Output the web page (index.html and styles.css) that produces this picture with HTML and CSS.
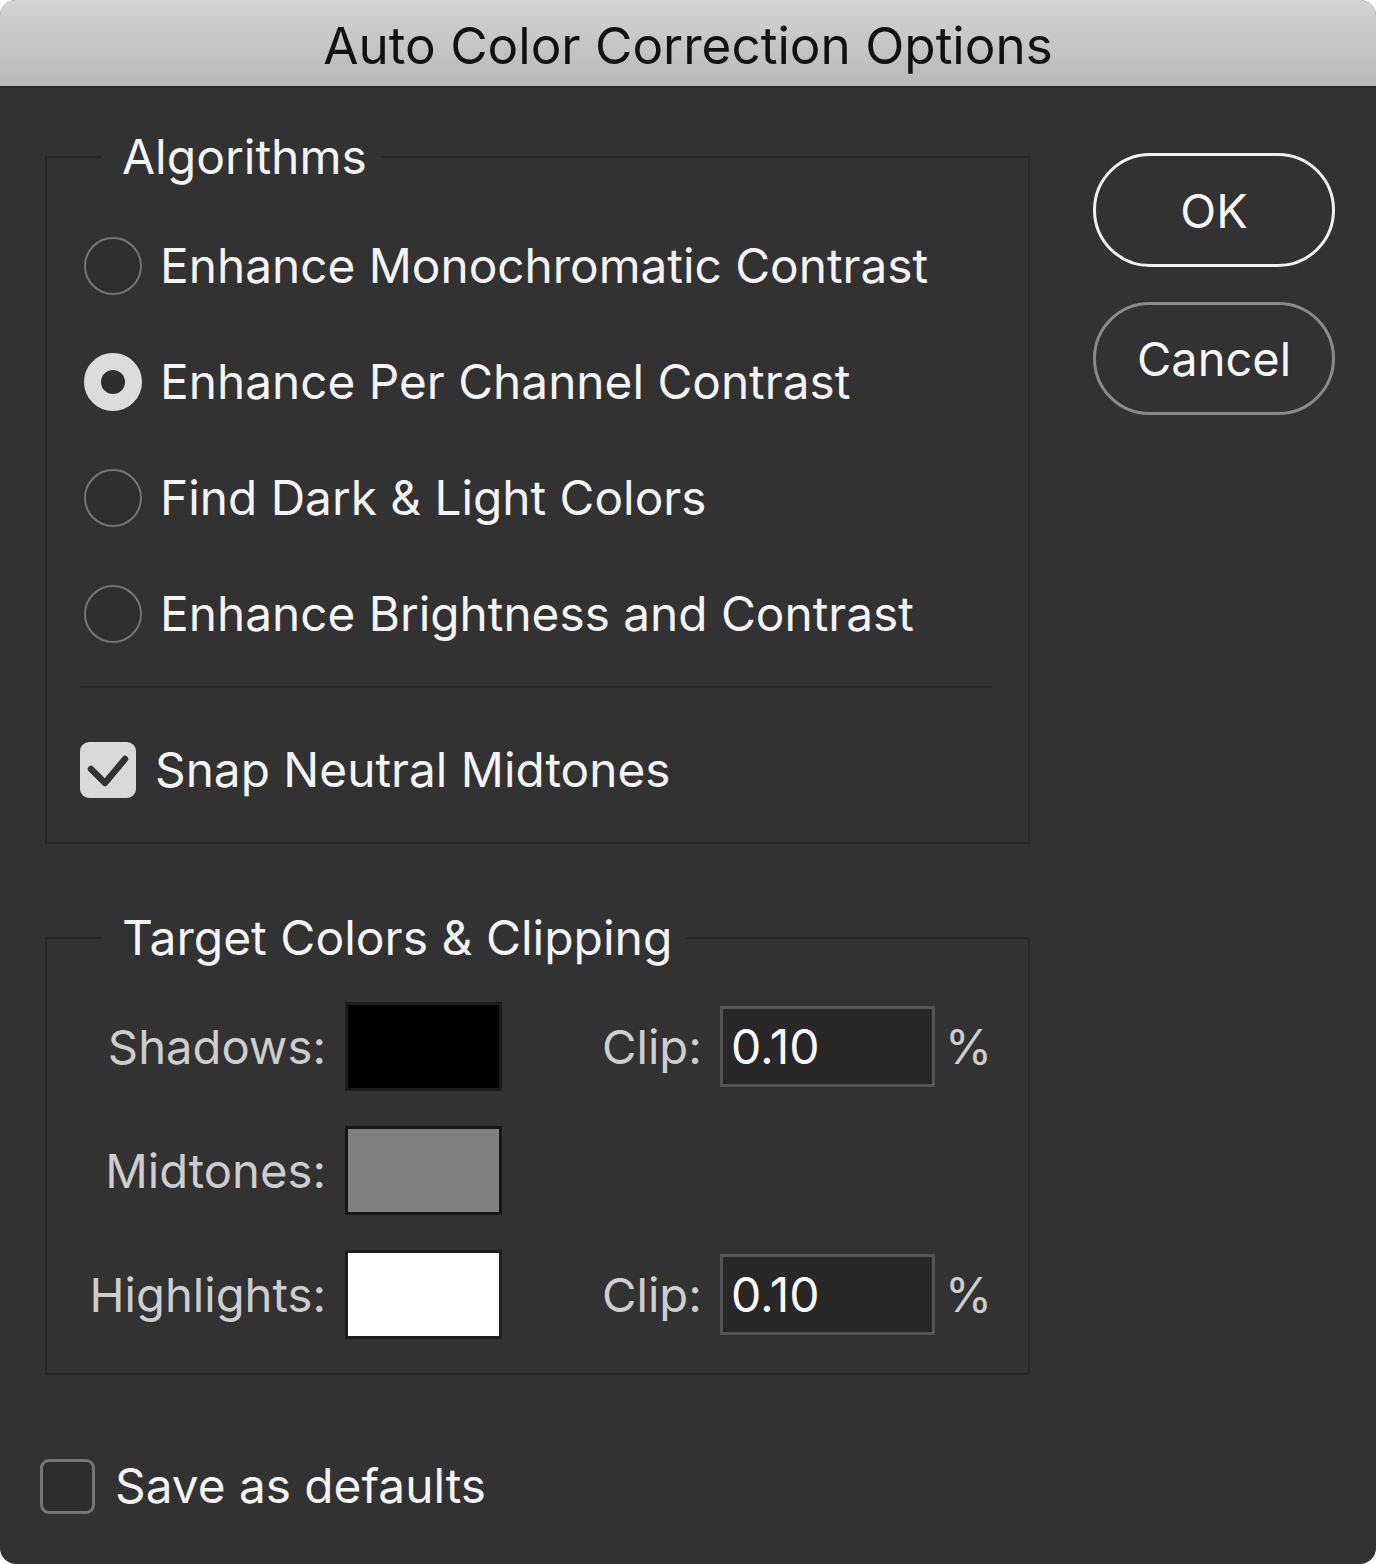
FILE: index.html
```html
<!DOCTYPE html>
<html>
<head>
<meta charset="utf-8">
<title>Auto Color Correction Options</title>
<link rel="stylesheet" href="styles.css">
</head>
<body>
<div class="dialog">
  <div class="titlebar">Auto Color Correction Options</div>
  <div class="main">
    <div class="top">
      <div class="left">
        <fieldset class="group algo">
          <legend>Algorithms</legend>
          <div class="row"><span class="radio"></span><span class="label">Enhance Monochromatic Contrast</span></div>
          <div class="row"><span class="radio on"></span><span class="label">Enhance Per Channel Contrast</span></div>
          <div class="row"><span class="radio"></span><span class="label">Find Dark &amp; Light Colors</span></div>
          <div class="row"><span class="radio"></span><span class="label">Enhance Brightness and Contrast</span></div>
          <div class="sep"></div>
          <div class="row check-row">
            <span class="checkbox on">
              <svg viewBox="0 0 56 56" width="56" height="56"><path d="M11 27 L25 41 L45 17" fill="none" stroke="#333" stroke-width="6.5" stroke-linecap="round" stroke-linejoin="round"/></svg>
            </span>
            <span class="label">Snap Neutral Midtones</span>
          </div>
        </fieldset>
        <fieldset class="group target">
          <legend>Target Colors &amp; Clipping</legend>
          <div class="grid">
            <div class="tlabel">Shadows:</div>
            <div><div class="swatch black"></div></div>
            <div class="tlabel clip">Clip:</div>
            <div><div class="input">0.10</div></div>
            <div class="pct">%</div>

            <div class="tlabel">Midtones:</div>
            <div><div class="swatch gray"></div></div>
            <div></div><div></div><div></div>

            <div class="tlabel">Highlights:</div>
            <div><div class="swatch white"></div></div>
            <div class="tlabel clip">Clip:</div>
            <div><div class="input">0.10</div></div>
            <div class="pct">%</div>
          </div>
        </fieldset>
      </div>
      <div class="buttons">
        <div class="btn default">OK</div>
        <div class="btn">Cancel</div>
      </div>
    </div>
    <div class="save">
      <span class="checkbox off"></span>
      <span class="label">Save as defaults</span>
    </div>
  </div>
</div>
</body>
</html>
```
FILE: styles.css
```css
html, body {
  margin: 0;
  padding: 0;
  background: #ffffff;
}
body {
  font-family: "Inter", "Liberation Sans", sans-serif;
}
.dialog {
  width: 1376px;
  height: 1564px;
  background: #323232;
  border-radius: 16px;
  overflow: hidden;
  display: flex;
  flex-direction: column;
}
.titlebar {
  height: 86px;
  flex: none;
  background: linear-gradient(#d4d4d4, #b8b8b8);
  border-bottom: 2px solid #262626;
  color: #111;
  font-size: 51.2px;
  line-height: 90px;
  text-align: center;
}
.main {
  flex: 1;
  display: flex;
  flex-direction: column;
}
.top {
  display: flex;
}
.left {
  width: 985px;
  margin-left: 45px;
  padding-top: 39px;
}
.group {
  margin: 0;
  border: 2px solid #262626;
  padding: 0 36px 0 37px;
  min-width: 0;
}
.group legend {
  margin-left: 18px;
  padding: 0 14px 0 20px;
  height: 60px;
  line-height: 60px;
  font-size: 48px;
  color: #f4f4f4;
}
.algo {
  padding-top: 21px;
  padding-bottom: 14px;
}
.target legend {
  margin-left: 55px;
}
.row {
  height: 116px;
  display: flex;
  align-items: center;
  color: #f4f4f4;
  font-size: 47.75px;
}
.radio {
  width: 54px;
  height: 54px;
  border: 2px solid #757575;
  border-radius: 50%;
  box-sizing: content-box;
  flex: none;
  margin-right: 18px;
  background: #2f2f2f;
  display: flex;
  align-items: center;
  justify-content: center;
}
.radio.on {
  background: #dcdcdc;
  border-color: #dcdcdc;
}
.radio.on::after {
  content: "";
  width: 24px;
  height: 24px;
  border-radius: 50%;
  background: #2e2e2e;
}
.sep {
  height: 2px;
  background: #262626;
  margin: 14px 0 0 -4px;
}
.check-row {
  margin-top: 24px;
  margin-left: -4px;
}
.checkbox {
  width: 56px;
  height: 56px;
  box-sizing: border-box;
  border-radius: 9px;
  flex: none;
  display: flex;
}
.checkbox.on {
  background: #d9d9d9;
  margin-right: 19px;
}
.checkbox.off {
  border: 3px solid #767676;
  background: #2d2d2d;
  margin-right: 20px;
  width: 55px;
  height: 55px;
}
.target {
  margin-top: 64px;
  padding: 16px 0 17px 0;
}
.grid {
  display: grid;
  grid-template-columns: 298px 257px 118px 225px auto;
  grid-auto-rows: 124px;
  align-items: center;
}
.tlabel {
  color: #cdcdcd;
  font-size: 47.2px;
  text-align: right;
  padding-right: 19px;
}
.tlabel.clip {
  text-align: left;
  padding-right: 0;
}
.swatch {
  width: 157px;
  height: 89px;
  box-sizing: border-box;
  border: 3px solid #171717;
}
.swatch.black { background: #000; border-color: #1c1c1c; }
.swatch.gray { background: #808080; }
.swatch.white { background: #fff; border-color: #1e1e1e; }
.input {
  width: 215px;
  height: 81px;
  box-sizing: border-box;
  border: 3px solid #545454;
  background: #272727;
  color: #fafafa;
  font-size: 48px;
  line-height: 75px;
  padding-left: 8px;
}
.pct {
  color: #cdcdcd;
  font-size: 48px;
}
.buttons {
  margin-left: 63px;
  padding-top: 65px;
  display: flex;
  flex-direction: column;
  gap: 35px;
}
.btn {
  width: 242px;
  height: 113px;
  box-sizing: border-box;
  border: 3px solid #8a8a8a;
  border-radius: 57px;
  color: #f6f6f6;
  font-size: 47px;
  display: flex;
  align-items: center;
  justify-content: center;
}
.btn.default {
  border-color: #f2f2f2;
  height: 114px;
}
.save {
  margin-top: 82px;
  margin-left: 40px;
  display: flex;
  align-items: center;
  color: #f4f4f4;
  font-size: 47.75px;
}
```
